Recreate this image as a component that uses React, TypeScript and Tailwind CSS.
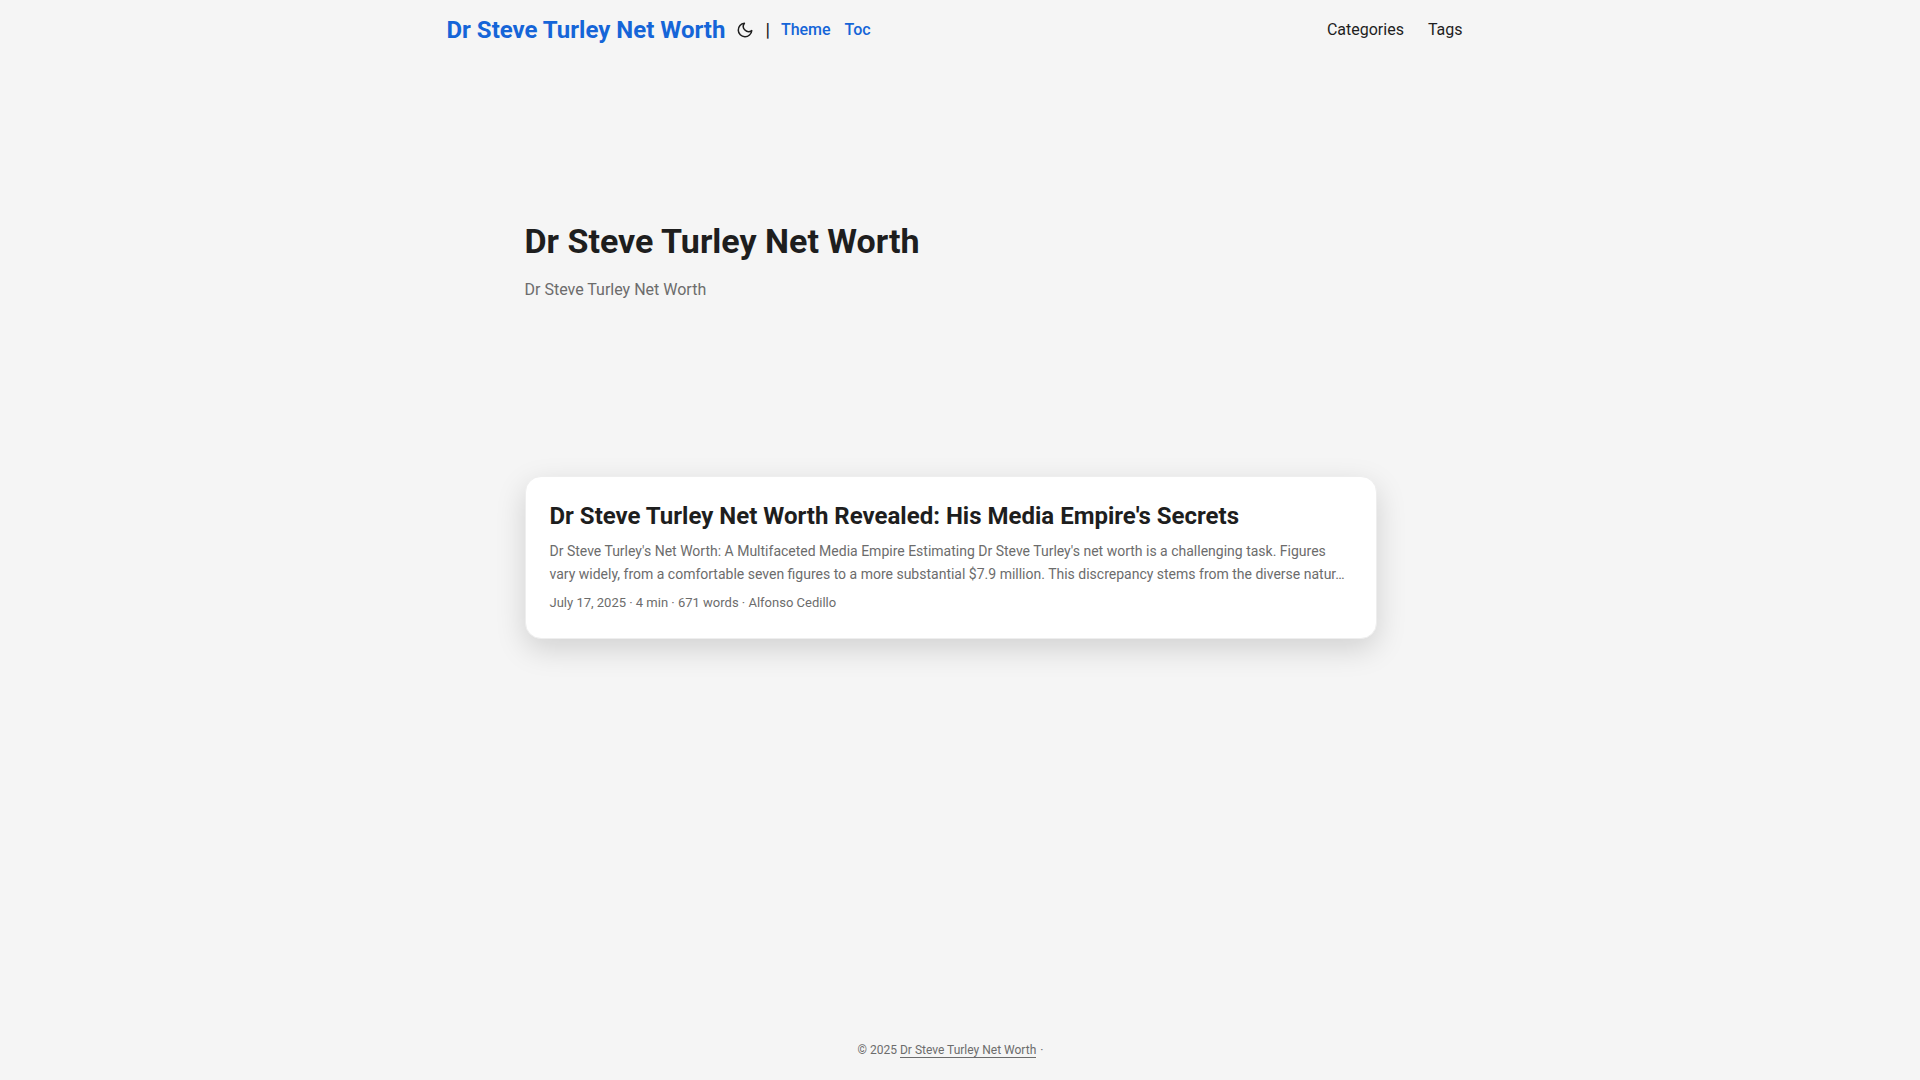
const NAV_LINKS = ['Categories', 'Tags']

const SITE = 'Dr Steve Turley Net Worth'

function MoonIcon() {
  return (
    <svg
      width="18"
      height="18"
      viewBox="0 0 24 24"
      fill="none"
      stroke="currentColor"
      strokeWidth="2"
      strokeLinecap="round"
      strokeLinejoin="round"
    >
      <path d="M21 12.79A9 9 0 1 1 11.21 3 7 7 0 0 0 21 12.79z" />
    </svg>
  )
}

function Header() {
  return (
    <header className="mx-auto flex w-full max-w-[1072px] flex-wrap justify-between leading-[60px]">
      <div className="ml-8 flex">
        <a href="#" className="text-2xl leading-[60px] font-bold text-[#1565d8]">
          {SITE}
        </a>
        <button type="button" aria-label="Toggle theme" className="px-[11px]">
          <MoonIcon />
        </button>
        <span className="mr-[11px] text-lg leading-[60px] font-medium">|</span>
        <ul className="flex gap-[14px] font-medium text-[#1565d8]">
          <li>
            <a href="#theme">Theme</a>
          </li>
          <li>
            <a href="#toc">Toc</a>
          </li>
        </ul>
      </div>
      <nav className="mx-6 flex gap-6">
        {NAV_LINKS.map((label) => (
          <a key={label} href={`#${label.toLowerCase()}`}>
            {label}
          </a>
        ))}
      </nav>
    </header>
  )
}

function PostCard() {
  return (
    <article className="rounded-2xl border border-[#eeeeee] bg-white p-6 shadow-[0_10px_30px_rgba(0,0,0,0.15)]">
      <h2 className="text-2xl leading-[31px] font-bold">
        Dr Steve Turley Net Worth Revealed: His Media Empire's Secrets
      </h2>
      <p className="mt-2 mb-1.5 text-sm leading-[23px] text-[#6c6c6c]">
        Dr Steve Turley's Net Worth: A Multifaceted Media Empire Estimating Dr Steve Turley's net worth is a
        challenging task. Figures vary widely, from a comfortable seven figures to a more substantial $7.9
        million. This discrepancy stems from the diverse natur…
      </p>
      <footer className="text-[13px] leading-[22px] text-[#6c6c6c]">
        July 17, 2025 · 4 min · 671 words · Alfonso Cedillo
      </footer>
    </article>
  )
}

export default function App() {
  return (
    <div className="flex min-h-screen flex-col bg-[#f5f5f5] pr-[19px] font-[Roboto,sans-serif] text-base text-[#1e1e1e]">
      <Header />
      <main className="mx-auto w-full max-w-[900px] flex-1 p-6">
        <section className="mb-6 flex min-h-[368px] flex-col justify-center">
          <h1 className="text-[34px] leading-[44px] font-bold">{SITE}</h1>
          <p className="my-[15px] leading-6 text-[#6c6c6c]">{SITE}</p>
        </section>
        <PostCard />
      </main>
      <footer className="py-[18px] text-center text-xs leading-6 text-[#6c6c6c]">
        © 2025{' '}
        <a href="#" className="border-b border-[#6c6c6c]">{SITE}</a>
        <span className="ml-1">·</span>
      </footer>
    </div>
  )
}
